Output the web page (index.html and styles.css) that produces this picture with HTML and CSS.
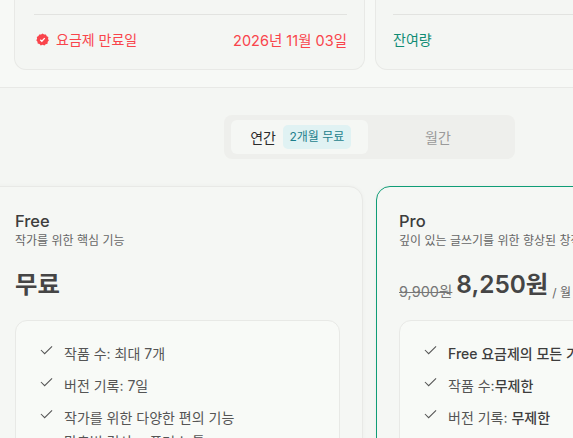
FILE: index.html
```html
<!DOCTYPE html>
<html lang="ko">
<head>
    <meta charset="UTF-8">
    <meta name="viewport" content="width=device-width, initial-scale=1.0">
    <title>요금제</title>
    <link rel="stylesheet" href="styles.css">
</head>
<body>
    <div class="page">
        <section class="usage-panel">
            <div class="usage-card">
                <div class="usage-row">
                    <span class="usage-label">
                        <svg class="badge-icon" viewBox="0 0 14 14"><path d="M7 .6l1.7 1.1 2-.1.9 1.8 1.7 1-.3 2 .9 1.6-1.3 1.5-.2 2-2 .5-1.3 1.5L7 12.7l-1.9.7-1.3-1.5-2-.5-.2-2L.3 7.9l.9-1.6-.3-2 1.7-1 .9-1.8 2 .1z" fill="#f9444b"/><path d="M4.6 7.2l1.7 1.7 3.1-3.4" fill="none" stroke="#fff" stroke-width="1.4"/></svg>
                        요금제 만료일
                    </span>
                    <span class="usage-date">2026년 11월 03일</span>
                </div>
            </div>
            <div class="usage-card usage-card-side">
                <div class="usage-row usage-row-side">잔여량</div>
            </div>
        </section>

        <div class="toggle">
            <div class="toggle-option toggle-active">연간 <span class="toggle-badge">2개월 무료</span></div>
            <div class="toggle-option">월간</div>
        </div>

        <section class="plans">
            <article class="plan">
                <h2>Free</h2>
                <p class="plan-desc">작가를 위한 핵심 기능</p>
                <div class="plan-price"><span class="price-main">무료</span></div>
                <ul class="features">
                    <li><svg class="check" viewBox="0 0 14 10"><path d="M1 5l4 4 8-8"/></svg>작품 수: 최대 7개</li>
                    <li><svg class="check" viewBox="0 0 14 10"><path d="M1 5l4 4 8-8"/></svg>버전 기록: 7일</li>
                    <li><svg class="check" viewBox="0 0 14 10"><path d="M1 5l4 4 8-8"/></svg>작가를 위한 다양한 편의 기능</li>
                    <li class="feature-sub">맞춤법 검사 + 플러스 툴</li>
                </ul>
            </article>
            <article class="plan plan-pro">
                <h2>Pro</h2>
                <p class="plan-desc">깊이 있는 글쓰기를 위한 향상된 창작 도구</p>
                <div class="plan-price">
                    <span class="price-old">9,900원</span>
                    <span class="price-main">8,250원</span>
                    <span class="price-unit">/ 월 (연간 결제)</span>
                </div>
                <ul class="features">
                    <li><svg class="check" viewBox="0 0 14 10"><path d="M1 5l4 4 8-8"/></svg><b>Free 요금제의 모든 기능</b></li>
                    <li><svg class="check" viewBox="0 0 14 10"><path d="M1 5l4 4 8-8"/></svg>작품 수:<b>무제한</b></li>
                    <li><svg class="check" viewBox="0 0 14 10"><path d="M1 5l4 4 8-8"/></svg>버전 기록:&nbsp;<b>무제한</b></li>
                    <li><svg class="check" viewBox="0 0 14 10"><path d="M1 5l4 4 8-8"/></svg>글 분석 기능</li>
                </ul>
            </article>
        </section>
    </div>
</body>
</html>
```

FILE: styles.css
```css
html, body {
    margin: 0;
    height: 100%;
    overflow: hidden;
}
body {
    font-family: Inter, "Noto Sans CJK KR", sans-serif;
    background-color: #f4f6f3;
    color: #3d3d3d;
}
.page {
    width: 800px;
    margin-left: -20px;
    margin-top: -100px;
}

/* --- usage --- */
.usage-panel {
    display: flex;
    gap: 10px;
    height: 188px;
    box-sizing: border-box;
    padding: 0 0 17px 34px;
    background-color: #f7f9f6;
    border-bottom: 1px solid #e8e9e6;
    border-radius: 0 0 12px 12px;
}
.usage-card {
    width: 351px;
    box-sizing: border-box;
    display: flex;
    flex-direction: column;
    justify-content: flex-end;
    padding: 0 17px 0 19px;
    background-color: #f4f6f3;
    border: 1px solid #e8e9e6;
    border-top: none;
    border-radius: 0 0 12px 12px;
}
.usage-row {
    display: flex;
    justify-content: space-between;
    align-items: center;
    box-sizing: border-box;
    height: 55px;
    padding-bottom: 6px;
    border-top: 1px solid #e2e3e0;
    font-size: 14px;
    color: #f9444b;
}
.usage-label {
    display: flex;
    align-items: center;
    gap: 7px;
    margin-left: 2px;
}
.usage-date {
    font-size: 14.5px;
}
.badge-icon {
    width: 13px;
    height: 13px;
}
.usage-card-side {
    width: 360px;
    padding-left: 17px;
}
.usage-row-side {
    color: #0f8c74;
}

/* --- toggle --- */
.toggle {
    display: flex;
    width: 291px;
    height: 44px;
    box-sizing: border-box;
    margin: 27px 0 27px 244px;
    padding: 5px 7px;
    background-color: #eeefec;
    border-radius: 8px;
}
.toggle-option {
    flex: 1;
    display: flex;
    align-items: center;
    justify-content: center;
    gap: 7px;
    font-size: 14px;
    color: #9a9a9a;
}
.toggle-active {
    flex: none;
    width: 137px;
    box-sizing: border-box;
    padding-left: 2px;
    background-color: #f5f7f4;
    border-radius: 6px;
    color: #2b2b2b;
}
.toggle-badge {
    padding: 4px 6.5px;
    height: 16px;
    line-height: 16px;
    font-size: 12px;
    color: #1d7f8c;
    background-color: #e0f2f3;
    border-radius: 5px;
}

/* --- plans --- */
.plans {
    display: flex;
    gap: 13px;
    align-items: flex-start;
}
.plan {
    width: 383px;
    height: 420px;
    box-sizing: border-box;
    padding: 24px 22px 0 34px;
    background-color: #f5f7f4;
    border: 1px solid #e8e9e6;
    border-radius: 14px;
    box-shadow: 0 0 4px rgba(0, 0, 0, 0.03);
}
.plan-pro {
    width: 400px;
    padding-left: 22px;
    border-color: #0f9d76;
}
h2 {
    margin: 0;
    font-size: 16.5px;
    line-height: 20px;
    font-weight: 500;
    color: #3d3d3d;
}
.plan-desc {
    margin: 1px 0 0;
    font-size: 12px;
    line-height: 18px;
    color: #666;
    white-space: nowrap;
}
.plan-price {
    display: flex;
    align-items: flex-end;
    gap: 4px;
    height: 36px;
    margin-top: 18px;
    white-space: nowrap;
}
.price-main {
    font-size: 24.4px;
    line-height: 40px;
    font-weight: 600;
    color: #454545;
}
.price-old {
    font-size: 14.5px;
    line-height: 24px;
    color: #777;
    text-decoration: line-through;
}
.price-unit {
    font-size: 12px;
    line-height: 22px;
    color: #666;
}
.features {
    list-style: none;
    margin: 16px 0 0;
    padding: 16px 24px;
    height: 200px;
    background-color: #f8faf7;
    border: 1px solid #e8e9e6;
    border-radius: 12px;
}
.features li {
    display: flex;
    align-items: center;
    height: 32px;
    font-size: 14px;
    color: #555;
    white-space: nowrap;
}
.features .feature-sub {
    margin-top: -8px;
    padding-left: 24px;
}
.features b {
    font-weight: 500;
    color: #3d3d3d;
}
.check {
    width: 13px;
    height: 10px;
    margin: -6px 11px 0 0;
    fill: none;
    stroke: #555;
    stroke-width: 1.1;
}
```
